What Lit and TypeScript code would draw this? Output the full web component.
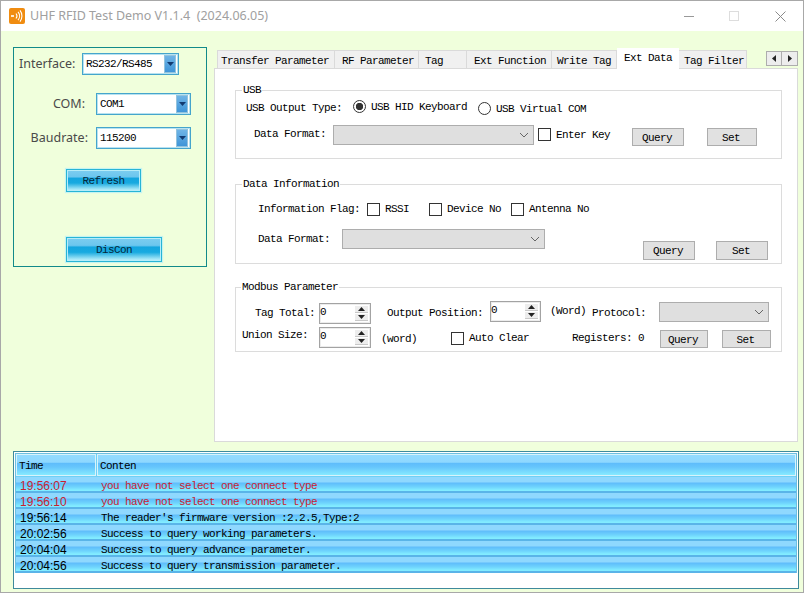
import { LitElement, html, css } from "lit";
import { customElement } from "lit/decorators.js";

const cb = (cls = "") => html`<span class="cb ${cls}"></span>`;
const radio = (on: boolean, cls = "") => html`<span class="radio ${on ? "on" : ""} ${cls}"></span>`;
const tx = (t: string, cls = "") => html`<span class="tx ${cls}">${t}</span>`;
const dis = (cls = "") => html`<span class="dis ${cls}"><svg width="10" height="6" viewBox="0 0 10 6"><path d="M1 1l4 4 4-4" fill="none" stroke="#666" stroke-width="1"/></svg></span>`;
const btn = (t: string, cls = "") => html`<span class="btn ${cls}">${t}</span>`;
const spin = (cls = "") => html`<span class="spin ${cls}"><span class="val">0</span><span class="arrows"><span class="ar"><svg width="7" height="4" viewBox="0 0 7 4"><path d="M3.5 0L7 4H0z" fill="#222"/></svg></span><span class="ar"><svg width="7" height="4" viewBox="0 0 7 4"><path d="M0 0h7L3.5 4z" fill="#222"/></svg></span></span></span>`;
const combo = (t: string, cls = "") => html`<span class="combo ${cls}"><span class="cval">${t}</span><span class="cbtn"><svg width="7" height="4" viewBox="0 0 7 4"><path d="M0 0h7L3.5 4z" fill="#123a70"/></svg></span></span>`;

const TABS: [string, string][] = [
  ["Transfer Parameter", "t1"],
  ["RF Parameter", "t2"],
  ["Tag", "t3"],
  ["Ext Function", "t4"],
  ["Write Tag", "t5"],
  ["Ext Data", "t6 active"],
  ["Tag Filter", "t7"],
];

const LOG: [string, string, boolean][] = [
  ["19:56:07", "you have not select one connect type", true],
  ["19:56:10", "you have not select one connect type", true],
  ["19:56:14", "The reader's firmware version :2.2.5,Type:2", false],
  ["20:02:56", "Success to query working parameters.", false],
  ["20:04:04", "Success to query advance parameter.", false],
  ["20:04:56", "Success to query transmission parameter.", false],
];

@customElement("app-root")
export class AppRoot extends LitElement {
  static styles = css`
    :host {
      display: block; width: 804px; height: 593px; box-sizing: border-box;
      border: 1px solid #a8a8a8; background: #f0ffdc; overflow: hidden;
      font-family: "Liberation Mono", monospace; font-size: 11px; letter-spacing: -0.6px; color: #000;
    }
    .titlebar { height: 30px; background: #fff; display: flex; align-items: center; padding-left: 8px; }
    .logo { width: 16px; height: 16px; display: block; margin-top: -1px; }
    .title { margin-left: 5px; font-family: "Noto Sans", sans-serif; font-size: 12.5px; letter-spacing: 0; color: #a0a0a0; white-space: pre; margin-top: -2px; }
    .wbtns { margin-left: auto; display: flex; align-items: center; }
    .wbtns svg { display: block; }
    .wmin { margin-right: 34px; }
    .wmax { margin-right: 35px; }
    .wclose { margin-right: 17px; }

    .main { display: flex; padding: 16px 0 0 12px; align-items: flex-start; }
    .left { width: 194px; height: 220px; box-sizing: border-box; border: 1px solid #128a8a; padding-top: 5px; margin-right: 7px; }
    .lrow { display: flex; align-items: center; }
    .lab { font-family: "Noto Sans", sans-serif; font-size: 12.5px; letter-spacing: 0; color: #4a4a4a; white-space: nowrap; line-height: 22px; }
    .lr1 { padding-left: 5px; }
    .lr1 .lab { width: 63px; }
    .lr2 .lab { width: 71px; text-align: right; margin-right: 11px; }
    .lr3 .lab { width: 74px; text-align: right; margin-right: 8px; margin-top: -1px; }
    .lr2 { margin-top: 18px; }
    .lr3 { margin-top: 12px; }
    .combo { display: flex; align-items: center; justify-content: space-between; box-sizing: border-box; height: 22px; background: #fff; border: 1px solid #45a5cc; box-shadow: inset 0 0 0 1px #b8e2f0; padding: 0 2px 0 3px; }
    .c97 { width: 97px; }
    .c95 { width: 95px; }
    .cval { white-space: nowrap; }
    .cbtn { width: 12px; height: 18px; box-sizing: border-box; border: 1px solid #93c3dd; background: linear-gradient(#6fb4e6, #3f95d8); display: flex; align-items: center; justify-content: center; }
    .blue { display: block; box-sizing: border-box; margin-left: 52px; border: 1px solid #27b5d6; box-shadow: inset 0 0 0 1px #b6ecf8, 0 0 1px 1px #c6f3f0;
      background: linear-gradient(#7ccdf0 0, #6cc6ee 32%, #14a5df 40%, #18aae0 62%, #9ce3f6 90%, #c6f3fb 100%);
      text-align: center; color: #06283a; }
    .b1 { width: 75px; height: 23px; line-height: 22px; margin-top: 20px; }
    .b2 { width: 96px; height: 25px; line-height: 24px; margin-top: 45px; }

    .tabs { margin-top: 3px; width: 584px; }
    .strip { height: 18px; display: flex; padding-left: 3px; position: relative; z-index: 1; }
    .tab { box-sizing: border-box; height: 18px; background: #f0f0f0; border: 1px solid #dadada; border-left: none; border-bottom: none; display: flex; align-items: center; padding-top: 3px; white-space: nowrap; }
    .tab:first-child { border-left: 1px solid #dadada; }
    .t1 { width: 118px; padding-left: 3px; } .t2 { width: 84px; padding-left: 7px; } .t3 { width: 48px; padding-left: 6px; } .t4 { width: 85px; padding-left: 7px; } .t5 { width: 65px; padding-left: 5px; } .t6 { width: 62px; padding-left: 7px; } .t7 { width: 68px; padding-left: 5px; }
    .tab.active { background: #fff; height: 21px; margin-top: -2px; border: none; padding-top: 0; padding-bottom: 2px; }
    .scroll { margin-left: auto; display: flex; padding-top: 1px; }
    .sb { width: 16px; height: 15px; box-sizing: border-box; border: 1px solid #adadad; background: #ededed; display: flex; align-items: center; justify-content: center; }
    .sb + .sb { border-left: none; }
    .page { box-sizing: border-box; height: 374px; background: #fff; border: 1px solid #dadada; padding: 21px 0 0 20px; }
    .group { position: relative; box-sizing: border-box; width: 547px; border: 1px solid #dcdcdc; }
    .legend { position: absolute; background: #fff; top: -7px; left: 6px; padding: 0 1px; line-height: 13px; white-space: nowrap; }
    .g1 { height: 69px; padding-top: 8px; }
    .g2 { height: 80px; padding-top: 17px; margin-top: 25px; }
    .g3 { height: 65px; padding-top: 13px; margin-top: 23px; }
    .g3 .legend { left: 5px; }

    .row { display: grid; align-items: start; }
    .u1 { height: 26px; padding-left: 10px; grid-template-columns: 107px 18px 107px 18px 1fr; }
    .u2 { padding-left: 18px; grid-template-columns: 79px 205px 18px 76px 75px 1fr; }
    .d1 { height: 27px; padding-left: 22px; grid-template-columns: 109px 18px 44px 18px 64px 18px 1fr; }
    .d2 { padding-left: 22px; grid-template-columns: 84px 301px 73px 1fr; }
    .m1r { height: 26px; padding-left: 19px; grid-template-columns: 64px 68px 103px 60px 42px 67px 1fr; }
    .m2r { padding-left: 6px; grid-template-columns: 77px 62px 70px 18px 103px 88px 62px 1fr; }

    .tx { display: block; line-height: 14px; white-space: pre; }
    .m1 { margin-top: 1px; } .m2 { margin-top: 2px; } .m3 { margin-top: 3px; } .m4 { margin-top: 4px; } .m5 { margin-top: 5px; } .m12 { margin-top: 12px; }
    .cb { display: block; width: 13px; height: 13px; box-sizing: border-box; border: 1px solid #333; background: #fff; }
    .radio { display: block; width: 13px; height: 13px; box-sizing: border-box; border: 1px solid #333; border-radius: 50%; background: #fff; }
    .radio.on { background: radial-gradient(circle, #333 0 3.4px, #fff 4px); }
    .dis { display: flex; align-items: center; justify-content: flex-end; box-sizing: border-box; height: 20px; background: #dfdfdf; border: 1px solid #adadad; padding-right: 4px; }
    .w201 { width: 201px; } .w203 { width: 203px; } .w110 { width: 110px; }
    .btn { display: block; box-sizing: border-box; height: 18px; background: #e1e1e1; border: 1px solid #adadad; text-align: center; line-height: 19px; padding-right: 2px; }
    .w52 { width: 52px; } .w50 { width: 50px; } .w48 { width: 48px; } .w49 { width: 49px; }
    .h19 { height: 19px; line-height: 18px; }
    .spin { display: flex; justify-content: space-between; box-sizing: border-box; height: 21px; background: #fff; border: 1px solid #a3a3a3; box-shadow: inset 0 0 0 1px #ececec; padding: 2px 1px 2px 0; }
    .s52 { width: 52px; } .s51 { width: 51px; }
    .val { line-height: 12px; }
    .arrows { display: flex; flex-direction: column; gap: 1px; margin-right: 1px; }
    .ar { width: 13px; height: 7px; margin-top: 0; background: #ededed; display: flex; align-items: center; justify-content: center; border-bottom: 1px solid #c8c8c8; }

    .log { box-sizing: border-box; width: 786px; height: 138px; margin: 9px 0 0 12px; background: #fff; border: 1px solid #3f8a9c; padding: 1px; }
    .list { box-sizing: border-box; height: 120px; border: 1px solid #6cc0e0; background: #5ab8ee; }
    .head { display: grid; grid-template-columns: 80px 1fr; gap: 1px; height: 23px; padding: 0; background: #6fd0f5; }
    .hc { box-sizing: border-box; border: 1px solid #d8f3fb; height: 22px; line-height: 22px; padding-left: 2px;
      background: linear-gradient(#93dbff 0, #8ed8ff 36%, #5fbdfb 42%, #66c6fc 60%, #86eaff 100%); }
    .lr { display: grid; grid-template-columns: 81px 1fr; height: 16px; line-height: 19px; padding-left: 4px; overflow: hidden;
      background: linear-gradient(#8fd8fe 0, #8fd8fe 5px, #5fbcfb 6px, #6fd4fd 10px, #82ecff 13px, #82ecff 14px, #5ab4e8 14px, #5ab4e8 16px); }
    .time { font-family: "Liberation Sans", sans-serif; font-size: 12px; letter-spacing: 0; }
    .msg { white-space: pre; }
    .red { color: #c81e32; }
  `;

  render() {
    return html`
      <div class="titlebar">
        <svg class="logo" viewBox="0 0 16 16"><rect width="16" height="16" rx="2" fill="#f08c10"/><circle cx="4" cy="8" r="1.1" fill="#fff"/><path d="M2 6.8v2.4L3.5 8z" fill="#fff"/><path d="M7 5.5a4 4 0 0 1 0 5M9 3.8a6.500 6.500 0 0 1 0 8.400M11 2.400a9 9 0 0 1 0 11.200" fill="none" stroke="#fff" stroke-width="1.1"/></svg>
        <span class="title">UHF RFID Test Demo V1.1.4  (2024.06.05)</span>
        <span class="wbtns">
          <svg class="wmin" width="11" height="11"><path d="M0 5.5h10" stroke="#999"/></svg>
          <svg class="wmax" width="11" height="11"><rect x=".5" y=".5" width="9" height="9" fill="none" stroke="#ddd"/></svg>
          <svg class="wclose" width="11" height="11"><path d="M.5.5l10 10M10.500.5l-10 10" stroke="#8a8a8a"/></svg>
        </span>
      </div>
      <div class="main">
        <div class="left">
          <div class="lrow lr1"><span class="lab">Interface:</span>${combo("RS232/RS485", "c97")}</div>
          <div class="lrow lr2"><span class="lab">COM:</span>${combo("COM1", "c95")}</div>
          <div class="lrow lr3"><span class="lab">Baudrate:</span>${combo("115200", "c95")}</div>
          <span class="blue b1">Refresh</span>
          <span class="blue b2">DisCon</span>
        </div>
        <div class="tabs">
          <div class="strip">
            ${TABS.map(([t, c]) => html`<span class="tab ${c}">${t}</span>`)}
            <span class="scroll">
              <span class="sb"><svg width="4" height="7"><path d="M4 0v7L0 3.5z" fill="#222"/></svg></span>
              <span class="sb"><svg width="4" height="7"><path d="M0 0v7l4-3.5z" fill="#222"/></svg></span>
            </span>
          </div>
          <div class="page">
            <div class="group g1">
              <span class="legend">USB</span>
              <div class="row u1">
                ${tx("USB Output Type:", "m2")}${radio(true, "m1")}${tx("USB HID Keyboard", "m1")}${radio(false, "m3")}${tx("USB Virtual COM", "m3")}
              </div>
              <div class="row u2">
                ${tx("Data Format:", "m2")}${dis("w201")}${cb("m3")}${tx("Enter Key", "m3")}${btn("Query", "w52 m3")}${btn("Set", "w50 m3")}
              </div>
            </div>
            <div class="group g2">
              <span class="legend">Data Information</span>
              <div class="row d1">
                ${tx("Information Flag:")}${cb("m1")}${tx("RSSI")}${cb("m1")}${tx("Device No")}${cb("m1")}${tx("Antenna No")}
              </div>
              <div class="row d2">
                ${tx("Data Format:", "m3")}${dis("w203")}${btn("Query", "w52 h19 m12")}${btn("Set", "w52 h19 m12")}
              </div>
            </div>
            <div class="group g3">
              <span class="legend">Modbus Parameter</span>
              <div class="row m1r">
                ${tx("Tag Total:", "m5")}${spin("s52 m2")}${tx("Output Position:", "m5")}${spin("s51")}${tx("(Word)", "m3")}${tx("Protocol:", "m5")}${dis("w110 m1")}
              </div>
              <div class="row m2r">
                ${tx("Union Size:", "m1")}${spin("s52")}${tx("(word)", "m5")}${cb("m5")}${tx("Auto Clear", "m4")}${tx("Registers: 0", "m4")}${btn("Query", "w48 m3")}${btn("Set", "w49 m3")}
              </div>
            </div>
          </div>
        </div>
      </div>
      <div class="log">
        <div class="list">
          <div class="head"><span class="hc">Time</span><span class="hc">Conten</span></div>
          ${LOG.map(([t, m, r]) => html`<div class="lr ${r ? "red" : ""}"><span class="time">${t}</span><span class="msg">${m}</span></div>`)}
        </div>
      </div>
    `;
  }
}
